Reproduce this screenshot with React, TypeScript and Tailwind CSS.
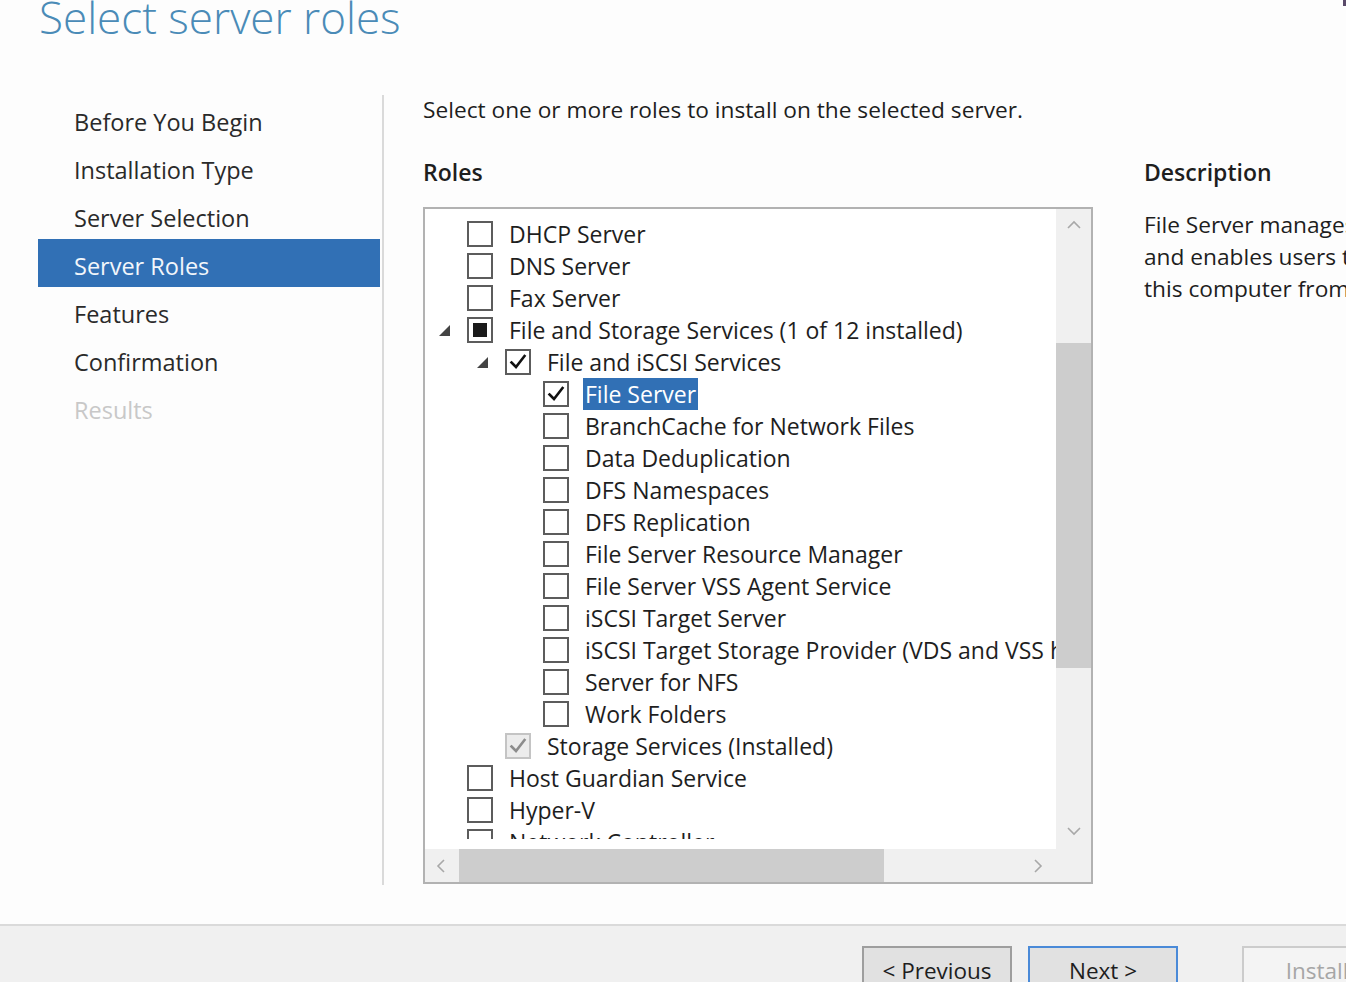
import React from "react";

type Box = "empty" | "checked" | "mixed" | "installed";

type Row = {
    label: string;
    level: number;
    box: Box;
    expanded?: boolean;
    selected?: boolean;
};

const ROWS: Row[] = [
    { label: "DHCP Server", level: 0, box: "empty" },
    { label: "DNS Server", level: 0, box: "empty" },
    { label: "Fax Server", level: 0, box: "empty" },
    { label: "File and Storage Services (1 of 12 installed)", level: 0, box: "mixed", expanded: true },
    { label: "File and iSCSI Services", level: 1, box: "checked", expanded: true },
    { label: "File Server", level: 2, box: "checked", selected: true },
    { label: "BranchCache for Network Files", level: 2, box: "empty" },
    { label: "Data Deduplication", level: 2, box: "empty" },
    { label: "DFS Namespaces", level: 2, box: "empty" },
    { label: "DFS Replication", level: 2, box: "empty" },
    { label: "File Server Resource Manager", level: 2, box: "empty" },
    { label: "File Server VSS Agent Service", level: 2, box: "empty" },
    { label: "iSCSI Target Server", level: 2, box: "empty" },
    { label: "iSCSI Target Storage Provider (VDS and VSS hardware providers)", level: 2, box: "empty" },
    { label: "Server for NFS", level: 2, box: "empty" },
    { label: "Work Folders", level: 2, box: "empty" },
    { label: "Storage Services (Installed)", level: 1, box: "installed" },
    { label: "Host Guardian Service", level: 0, box: "empty" },
    { label: "Hyper-V", level: 0, box: "empty" },
    { label: "Network Controller", level: 0, box: "empty" },
];

const NAV = [
    { label: "Before You Begin" },
    { label: "Installation Type" },
    { label: "Server Selection" },
    { label: "Server Roles", active: true },
    { label: "Features" },
    { label: "Confirmation" },
    { label: "Results", disabled: true },
];

function Check({ color }: { color: string }) {
    return (
        <svg width="20" height="20" viewBox="0 0 20 20" fill="none">
            <path d="M3.5 10.5 L8 15 L16.5 4" stroke={color} strokeWidth="2.6" strokeLinecap="square" />
        </svg>
    );
}

function CheckBox({ box }: { box: Box }) {
    if (box === "installed") {
        return (
            <span className="flex items-center justify-center w-[26px] h-[26px] shrink-0 border-2 border-[#c4c4c4] bg-[#ececec]">
                <Check color="#8c8c8c" />
            </span>
        );
    }
    return (
        <span className="flex items-center justify-center w-[26px] h-[26px] shrink-0 border-2 border-[#5c5c5c] bg-white">
            {box === "checked" && <Check color="#111111" />}
            {box === "mixed" && <span className="w-[14px] h-[14px] bg-[#1a1a1a]" />}
        </span>
    );
}

function Chevron({ dir }: { dir: "up" | "down" | "left" | "right" }) {
    const d = {
        up: "M2 10 L8 4 L14 10",
        down: "M2 4 L8 10 L14 4",
        left: "M10 2 L4 8 L10 14",
        right: "M4 2 L10 8 L4 14",
    }[dir];
    return (
        <svg width="16" height="16" viewBox="0 0 16 16" fill="none">
            <path d={d} stroke="#a8a8a8" strokeWidth="1.6" />
        </svg>
    );
}

export default function App() {
    return (
        <div
            className="w-[1346px] h-[982px] overflow-hidden flex flex-col bg-[#fdfdfd] text-[#1e1e1e]"
            style={{ fontFamily: '"Open Sans", "Noto Sans", sans-serif' }}
        >
            {/* Title */}
            <div className="h-[95px] shrink-0 overflow-hidden pl-[39px] relative">
                <h1 className="mt-[-5px] text-[44px] leading-none font-light text-[#4a8bb7]">
                    Select server roles
                </h1>
                <span className="absolute right-0 top-0 w-[3px] h-[6px] bg-[#5a4a6a]" />
            </div>

            <div className="flex flex-1">
                {/* Steps */}
                <nav className="w-[380px] shrink-0 pl-[38px] flex flex-col">
                    {NAV.map(item => (
                        <div
                            key={item.label}
                            className={
                                "h-[48px] flex items-center pl-[36px] pt-[8px] text-[23.5px] " +
                                (item.active
                                    ? "bg-[#3170b5] text-[#f2f6fb]"
                                    : item.disabled
                                        ? "text-[#c8c8c8]"
                                        : "text-[#2a2a2a]")
                            }
                        >
                            {item.label}
                        </div>
                    ))}
                </nav>

                <div className="ml-[2px] w-[2px] h-[790px] bg-[#dadada] shrink-0" />

                {/* Content */}
                <div className="pl-[39px] flex flex-1 min-w-0">
                    <div className="w-[670px] shrink-0 flex flex-col">
                        <div className="h-[30px] flex items-center text-[22.7px] whitespace-nowrap">
                            Select one or more roles to install on the selected server.
                        </div>
                        <div className="mt-[32px] h-[30px] flex items-center text-[23px] font-semibold">
                            Roles
                        </div>
                        <div className="mt-[20px] h-[677px] border-2 border-[#b2b2b2] bg-white flex">
                            <div className="flex-1 min-w-0 flex flex-col">
                                <div className="flex-1 min-h-0 flex flex-col pt-[9px] pb-[10px]">
                                    <div className="flex-1 overflow-hidden">
                                        {ROWS.map(row => (
                                            <div
                                                key={row.label}
                                                className="h-[32px] flex items-center pl-[10px] whitespace-nowrap text-[23px]"
                                            >
                                                <span className="shrink-0" style={{ width: row.level * 38 }} />
                                                <span className="w-[32px] shrink-0 flex items-center">
                                                    {row.expanded && (
                                                        <svg width="11" height="11" viewBox="0 0 11 11" className="ml-[4px]">
                                                            <polygon points="11,0 11,11 0,11" fill="#444444" />
                                                        </svg>
                                                    )}
                                                </span>
                                                <CheckBox box={row.box} />
                                                <span
                                                    className={
                                                        "ml-[14px] px-[2px] h-[32px] flex items-center " +
                                                        (row.selected ? "bg-[#3170b5] text-white" : "")
                                                    }
                                                >
                                                    {row.label}
                                                </span>
                                            </div>
                                        ))}
                                    </div>
                                </div>
                                {/* horizontal scrollbar */}
                                <div className="h-[33px] shrink-0 bg-[#f0f0f0] flex items-stretch">
                                    <div className="w-[34px] flex items-center justify-center">
                                        <Chevron dir="left" />
                                    </div>
                                    <div className="w-[425px] bg-[#cdcdcd]" />
                                    <div className="flex-1" />
                                    <div className="w-[34px] flex items-center justify-center">
                                        <Chevron dir="right" />
                                    </div>
                                </div>
                            </div>
                            {/* vertical scrollbar */}
                            <div className="w-[35px] shrink-0 flex flex-col bg-[#f0f0f0]">
                                <div className="h-[34px] flex items-center justify-center">
                                    <Chevron dir="up" />
                                </div>
                                <div className="mt-[100px] h-[325px] bg-[#cdcdcd]" />
                                <div className="flex-1" />
                                <div className="h-[34px] flex items-center justify-center">
                                    <Chevron dir="down" />
                                </div>
                                <div className="h-[33px]" />
                            </div>
                        </div>
                    </div>

                    <div className="ml-[51px] flex-1 min-w-0 overflow-hidden">
                        <div className="mt-[62px] h-[30px] flex items-center text-[23px] font-semibold">
                            Description
                        </div>
                        <div className="mt-[22px] text-[22.7px] leading-[32px] whitespace-nowrap">
                            <div>File Server manages shared folders</div>
                            <div>and enables users to access files on</div>
                            <div>this computer from the network.</div>
                        </div>
                    </div>
                </div>
            </div>

            {/* Footer */}
            <div className="h-[58px] shrink-0 border-t-2 border-[#dadada] bg-[#f0f0f0] flex items-start pt-[20px] pl-[862px] overflow-hidden">
                <button className="w-[150px] h-[48px] shrink-0 border-2 border-[#9e9e9e] bg-[#e1e1e1] text-[22.5px] text-[#1e1e1e] flex justify-center pt-[6px]">
                    &lt; Previous
                </button>
                <button className="ml-[16px] w-[150px] h-[48px] shrink-0 border-2 border-[#4a8ad8] bg-[#e1e1e1] text-[22.5px] text-[#1e1e1e] flex justify-center pt-[6px]">
                    Next &gt;
                </button>
                <button className="ml-[64px] w-[150px] h-[48px] shrink-0 border-2 border-[#cccccc] bg-[#f4f4f4] text-[22.5px] text-[#a6a6a6] flex justify-center pt-[6px]">
                    Install
                </button>
            </div>
        </div>
    );
}
